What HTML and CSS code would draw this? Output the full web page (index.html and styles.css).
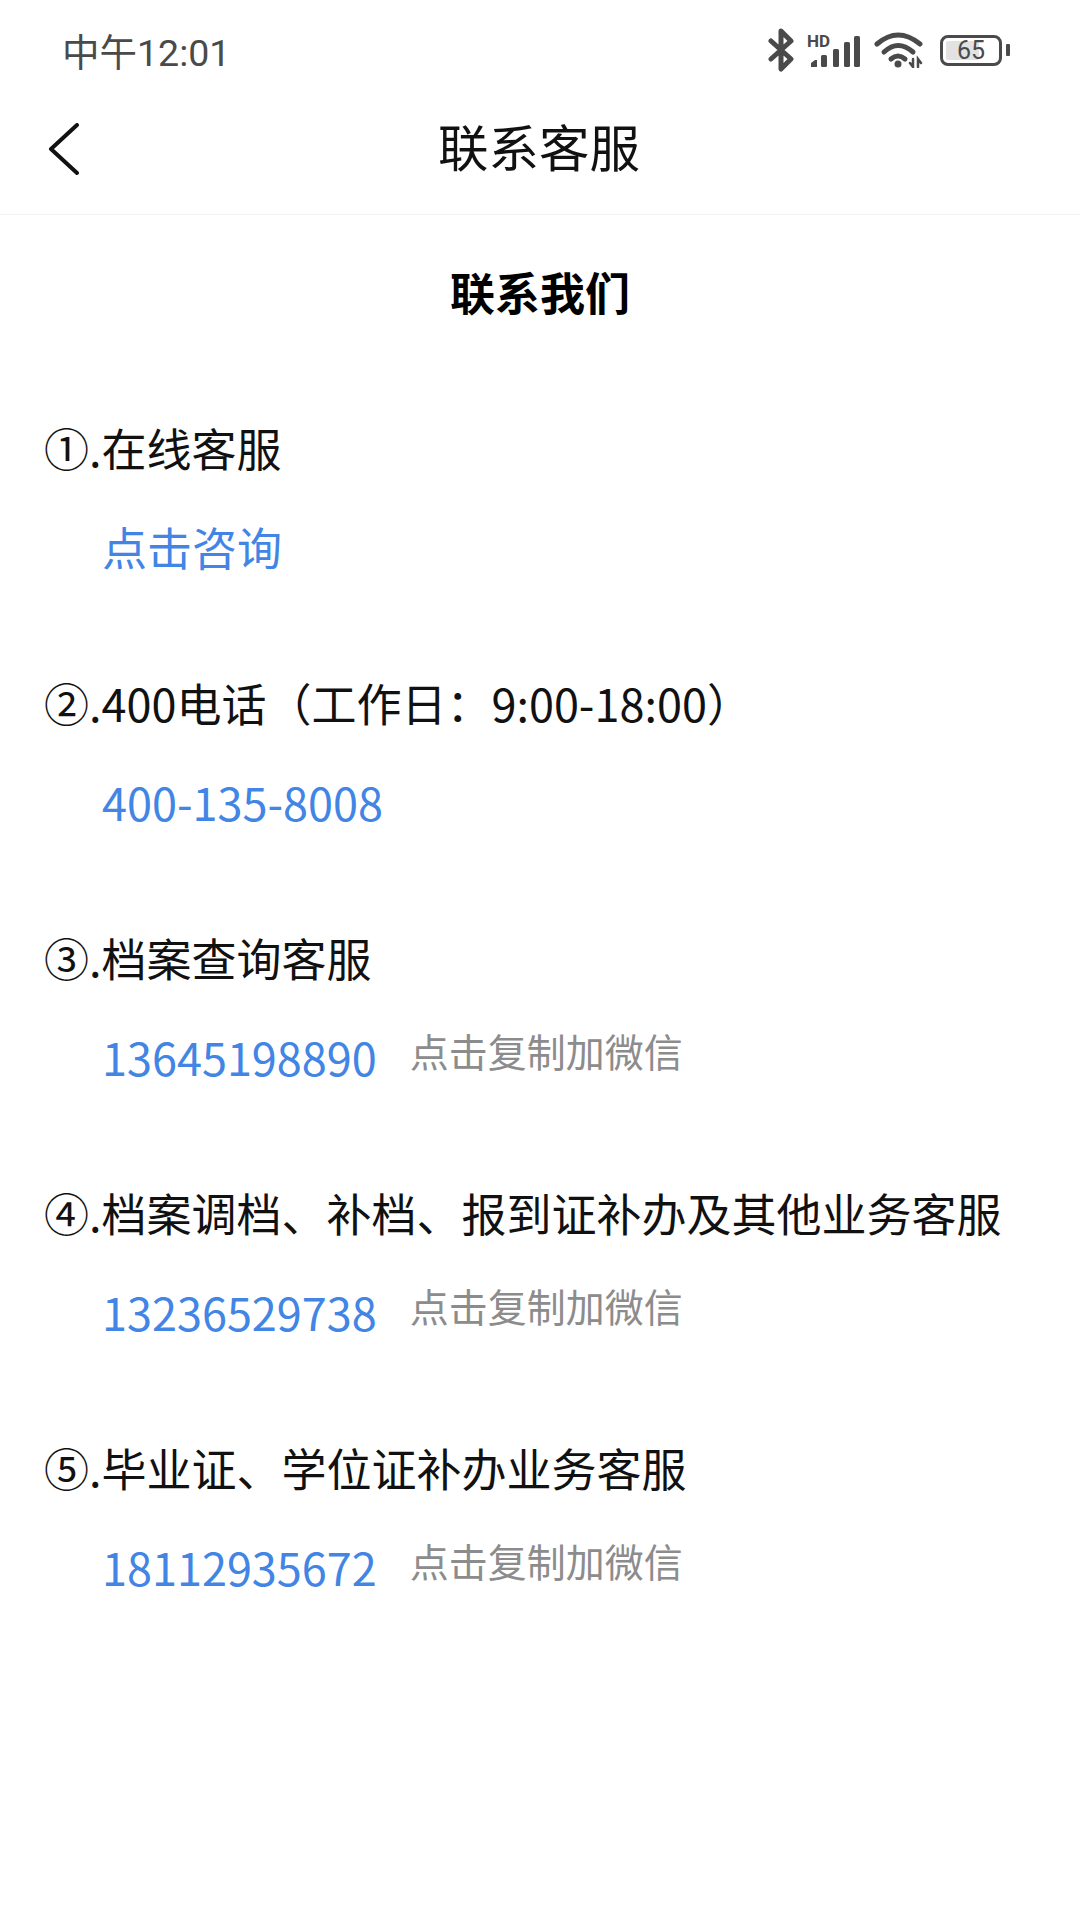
FILE: index.html
```html
<!DOCTYPE html>
<html lang="zh-CN">
<head>
    <meta charset="UTF-8">
    <meta name="viewport" content="width=device-width, initial-scale=1.0">
    <title>联系客服</title>
    <link rel="stylesheet" href="styles.css">
</head>
<body>

    <div class="status-bar">
        <span class="status-time">中午12:01</span>
        <div class="status-icons">
            <!-- bluetooth -->
            <svg class="icon-bt" width="28" height="44" viewBox="0 0 28 44" fill="none" stroke="#4a4a4a" stroke-width="5" stroke-linecap="round" stroke-linejoin="round">
                <path d="M5 13 L25 31 L15 41 V3 L25 13 L5 31"/>
            </svg>
            <!-- HD + signal -->
            <svg class="icon-signal" width="54" height="40" viewBox="0 0 54 40">
                <text x="0" y="17" class="hd-text">HD</text>
                <path d="M4 37 V33 L8 30 H10 V37 Z" fill="#4a4a4a"/>
                <rect x="14" y="25" width="6" height="12" rx="1.5" fill="#4a4a4a"/>
                <rect x="26" y="19" width="6" height="18" rx="1.5" fill="#4a4a4a"/>
                <rect x="37" y="12" width="6" height="25" rx="1.5" fill="#4a4a4a"/>
                <rect x="47" y="6" width="6" height="31" rx="1.5" fill="#4a4a4a"/>
            </svg>
            <!-- wifi -->
            <svg class="icon-wifi" width="50" height="36" viewBox="0 0 50 36" fill="none" stroke="#4a4a4a" stroke-width="5" stroke-linecap="round">
                <path d="M3 12 Q24 -6 46 12"/>
                <path d="M10 20 Q24 7 39 20"/>
                <path d="M17 27 Q24 21 31 27"/>
                <circle cx="24" cy="32" r="3.5" fill="#4a4a4a" stroke="none"/>
                <path d="M36 31 L39 35 L39 27 M44 35 L44 27 L47 31" stroke-width="2.5"/>
            </svg>
            <!-- battery -->
            <div class="battery">
                <div class="battery-body">
                    <div class="battery-fill"></div>
                    <span class="battery-num">65</span>
                </div>
                <div class="battery-tip"></div>
            </div>
        </div>
    </div>

    <div class="nav-bar">
        <svg class="back-icon" width="32" height="54" viewBox="0 0 32 54" fill="none" stroke="#111" stroke-width="4" stroke-linecap="round" stroke-linejoin="round">
            <path d="M29 2 L3 26 L29 50"/>
        </svg>
        <span class="nav-title">联系客服</span>
    </div>

    <div class="content">
        <h1 class="page-title">联系我们</h1>

        <div class="item">
            <p class="item-name">①.在线客服</p>
            <div class="item-row"><span class="link">点击咨询</span></div>
        </div>
        <div class="item">
            <p class="item-name">②.400电话（工作日：9:00-18:00）</p>
            <div class="item-row"><span class="link">400-135-8008</span></div>
        </div>
        <div class="item">
            <p class="item-name">③.档案查询客服</p>
            <div class="item-row">
                <span class="link">13645198890</span>
                <span class="copy-tip">点击复制加微信</span>
            </div>
        </div>
        <div class="item">
            <p class="item-name">④.档案调档、补档、报到证补办及其他业务客服</p>
            <div class="item-row">
                <span class="link">13236529738</span>
                <span class="copy-tip">点击复制加微信</span>
            </div>
        </div>
        <div class="item">
            <p class="item-name">⑤.毕业证、学位证补办业务客服</p>
            <div class="item-row">
                <span class="link">18112935672</span>
                <span class="copy-tip">点击复制加微信</span>
            </div>
        </div>
    </div>

</body>
</html>
```

FILE: styles.css
```css
body {
    font-family: "Noto Sans CJK SC", "Noto Sans", sans-serif;
    background-color: #fff;
    margin: 0;
    width: 1080px;
    height: 1920px;
    overflow: hidden;
    color: #111;
}

.status-bar {
    height: 100px;
    display: flex;
    justify-content: space-between;
    align-items: center;
    padding: 0 70px 0 62px;
    box-sizing: border-box;
}

.status-time {
    font-family: Roboto, "Noto Sans CJK SC", sans-serif;
    font-size: 37.5px;
    color: #4a4a4a;
    position: relative;
    top: -1px;
}

.status-icons {
    display: flex;
    align-items: center;
    gap: 13px;
}

.hd-text {
    font-family: Roboto, sans-serif;
    font-size: 17px;
    font-weight: 700;
    fill: #4a4a4a;
}

.battery {
    display: flex;
    align-items: center;
    gap: 4px;
    margin-left: 3px;
}

.battery-body {
    width: 62px;
    height: 31px;
    box-sizing: border-box;
    border: 3px solid #4a4a4a;
    border-radius: 8px;
    padding: 3px;
    position: relative;
    display: flex;
}

.battery-fill {
    width: 65%;
    background-color: #e2e2e2;
    border-radius: 2px;
}

.battery-num {
    position: absolute;
    left: 0;
    right: 0;
    top: 0;
    text-align: center;
    font-family: Roboto, sans-serif;
    font-size: 25px;
    line-height: 25px;
    color: #4a4a4a;
}

.battery-tip {
    width: 4px;
    height: 12px;
    background-color: #4a4a4a;
    border-radius: 1px;
}

.nav-bar {
    height: 115px;
    display: flex;
    align-items: center;
    justify-content: center;
    position: relative;
    border-bottom: 1px solid #f3f3f3;
    box-sizing: border-box;
    padding: 0 2px 25px 0;
}

.back-icon {
    position: absolute;
    left: 48px;
    top: 23px;
}

.nav-title {
    font-size: 50.5px;
    color: #111;
    line-height: 66px;
}

.content {
    padding: 0 44px;
}

.page-title {
    font-size: 45px;
    font-weight: 700;
    text-align: center;
    margin: 44px 0 0;
    line-height: 66px;
    color: #000;
}

.item {
    margin-top: 90px;
}

.item + .item {
    margin-top: 91px;
}

.item-name {
    font-size: 45px;
    line-height: 66px;
    margin: 0;
}

.item-row {
    display: flex;
    align-items: center;
    gap: 33px;
    margin-top: 32px;
    padding-left: 58px;
    height: 66px;
}

.link {
    font-size: 45px;
    color: #4285e4;
}

.copy-tip {
    font-size: 39px;
    color: #8c8c8c;
    position: relative;
    top: -6px;
}
```
